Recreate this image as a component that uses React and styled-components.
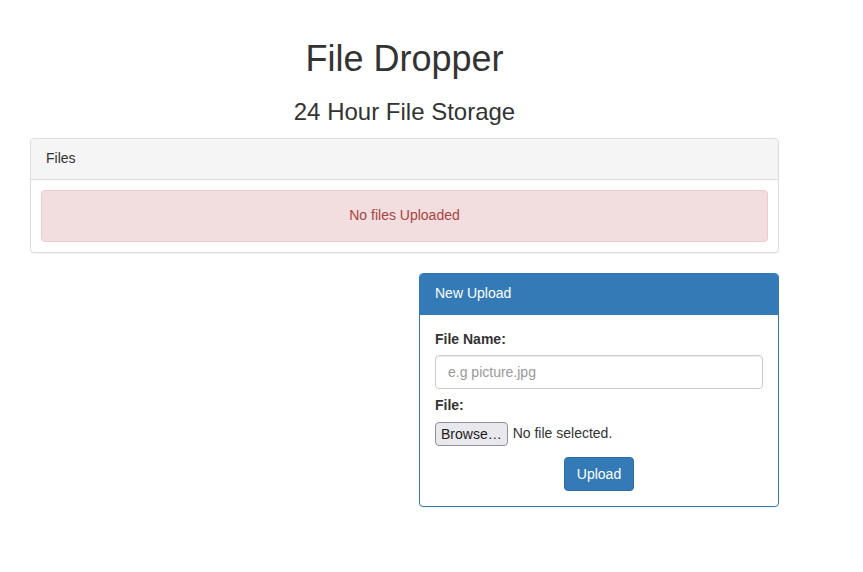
import React from 'react';
import styled, { createGlobalStyle } from 'styled-components';

const GlobalStyle = createGlobalStyle`
  * { box-sizing: border-box; }
  body {
    margin: 0;
    background: #fff;
    color: #333;
    font-family: "Liberation Sans", Arial, sans-serif;
    font-size: 14px;
    line-height: 1.42857;
  }
`;

const Page = styled.div`
  width: 749px;
  margin-left: 30px;
`;

const Title = styled.h1`
  margin: 39px 0 0;
  text-align: center;
  font-size: 36px;
  font-weight: 500;
  line-height: 1.1;
`;

const Subtitle = styled.h3`
  margin: 20px 0 13px;
  text-align: center;
  font-size: 24px;
  font-weight: 500;
  line-height: 1.1;
`;

const Panel = styled.div`
  border: 1px solid ${p => (p.primary ? '#337ab7' : '#ddd')};
  border-radius: 4px;
  background: #fff;
  box-shadow: 0 1px 1px rgba(0, 0, 0, 0.05);
  margin-bottom: 20px;
  overflow: hidden;
`;

const PanelHeading = styled.div`
  padding: 10px 15px;
  background: ${p => (p.primary ? '#337ab7' : '#f5f5f5')};
  color: ${p => (p.primary ? '#fff' : '#333')};
  border-bottom: 1px solid ${p => (p.primary ? '#337ab7' : '#ddd')};
`;

const PanelBody = styled.div`
  padding: ${p => p.pad || '15px'};
`;

const Alert = styled.div`
  padding: 15px;
  border: 1px solid #ebccd1;
  border-radius: 4px;
  background: #f2dede;
  color: #a94442;
  text-align: center;
`;

const Row = styled.div`
  display: grid;
  grid-template-columns: 1fr 1fr;
  column-gap: 29px;
`;

const Label = styled.label`
  display: block;
  font-weight: 700;
  margin-bottom: 5px;
`;

const TextInput = styled.input`
  display: block;
  width: 100%;
  height: 34px;
  padding: 6px 12px;
  margin-bottom: 7px;
  font: inherit;
  color: #555;
  border: 1px solid #ccc;
  border-radius: 4px;
  box-shadow: inset 0 1px 1px rgba(0, 0, 0, 0.075);
  &::placeholder { color: #999; }
`;

const FileRow = styled.div`
  display: flex;
  align-items: center;
  gap: 5px;
  height: 26px;
`;

const BrowseButton = styled.button`
  height: 24px;
  padding: 0 5px;
  font-family: inherit;
  font-size: 14px;
  color: #1b1b1b;
  background: #e9e9ed;
  border: 1px solid #8f8f9d;
  border-radius: 4px;
`;

const Actions = styled.div`
  display: flex;
  justify-content: center;
  margin-top: 10px;
`;

const PrimaryButton = styled.button`
  padding: 6px 12px;
  font-family: inherit;
  font-size: 14px;
  line-height: 20px;
  color: #fff;
  background: #337ab7;
  border: 1px solid #2e6da4;
  border-radius: 4px;
`;

export default function App() {
  return (
    <>
      <GlobalStyle />
      <Page>
        <Title>File Dropper</Title>
        <Subtitle>24 Hour File Storage</Subtitle>
        <Panel>
          <PanelHeading>Files</PanelHeading>
          <PanelBody pad="10px">
            <Alert>No files Uploaded</Alert>
          </PanelBody>
        </Panel>
        <Row>
          <div />
          <Panel primary>
            <PanelHeading primary>New Upload</PanelHeading>
            <PanelBody>
              <Label>File Name:</Label>
              <TextInput type="text" placeholder="e.g picture.jpg" />
              <Label>File:</Label>
              <FileRow>
                <BrowseButton type="button">Browse…</BrowseButton>
                <span>No file selected.</span>
              </FileRow>
              <Actions>
                <PrimaryButton type="button">Upload</PrimaryButton>
              </Actions>
            </PanelBody>
          </Panel>
        </Row>
      </Page>
    </>
  );
}
